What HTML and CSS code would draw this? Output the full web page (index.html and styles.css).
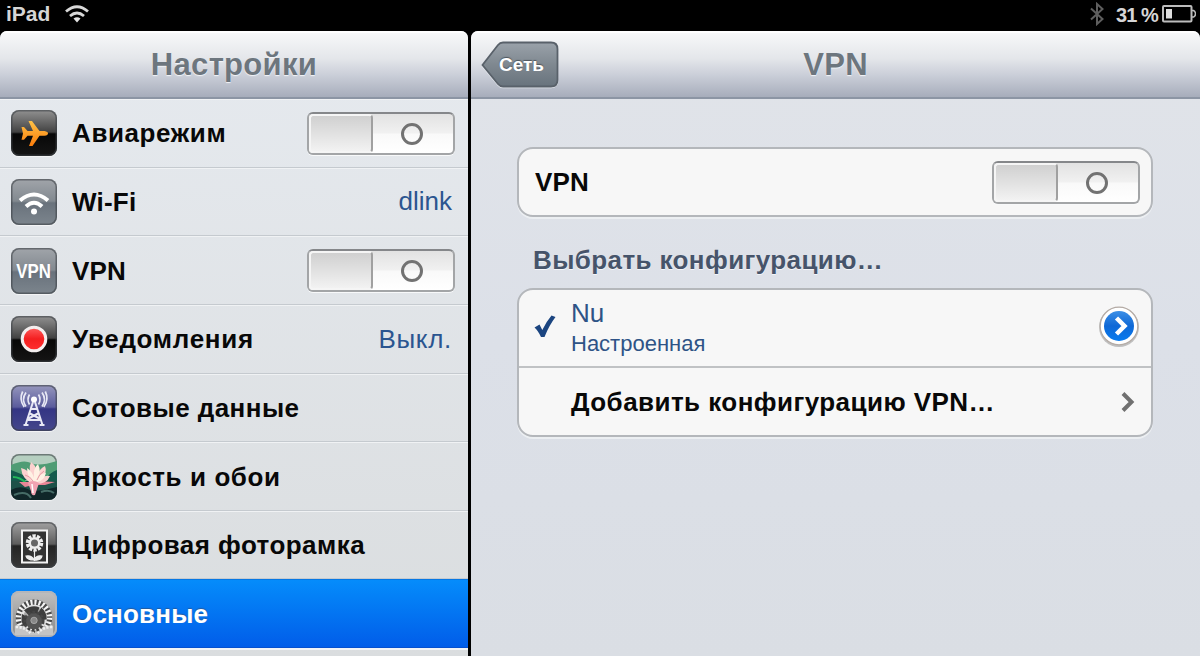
FILE: index.html
```html
<!DOCTYPE html>
<html lang="ru">
<head>
  <meta charset="UTF-8">
  <meta name="viewport" content="width=device-width, initial-scale=1.0">
  <title>Настройки</title>
  <link rel="stylesheet" href="styles.css">
</head>
<body>
  <!-- Строка состояния -->
  <div class="status-bar">
    <span class="device">iPad</span>
    <svg class="status-wifi" width="26" height="20" viewBox="0 0 26 20" fill="none" stroke="#d8d8d8" stroke-width="2.8">
      <path d="M2 7.5Q13-2 24 7.5"/>
      <path d="M6 12Q13 6 20 12"/>
      <path d="M9.500 14.600Q13 11.800 16.500 14.600L13 18.500z" fill="#e4e4e4" stroke="none"/>
    </svg>
    <svg class="bluetooth" width="14" height="24" viewBox="0 0 14 24" fill="none" stroke="#5e5e5e" stroke-width="2">
      <path d="M1 6.500L12.500 17 7 22V2l5.500 5L1 17.500"/>
    </svg>
    <span class="percent">31 %</span>
    <svg class="battery" width="34" height="18" viewBox="0 0 34 18">
      <rect x="1" y="1" width="28.500" height="15.500" rx="1" fill="none" stroke="#bdbdbd" stroke-width="2"/>
      <path d="M30 5.500h1.500q2 1 2 3.300t-2 3.300H30" fill="none" stroke="#bdbdbd" stroke-width="1.500"/>
      <rect x="4" y="4" width="6" height="9.500" fill="#dedede"/>
    </svg>
  </div>

  <div class="split">
    <!-- Список разделов -->
    <div class="sidebar">
      <div class="header"><h1 class="title">Настройки</h1></div>
      <div class="row">
        <div class="icon icon-black">
          <svg viewBox="0 0 46 46">
            <defs>
              <linearGradient id="orange" x1="0" y1="0" x2="0" y2="1"><stop offset="0" stop-color="#ffc247"/><stop offset="1" stop-color="#fb7d0b"/></linearGradient>
            </defs>
            <path d="M10.500 17h2.500l3.500 4h5.500L17.500 11h3.500l7.500 10h5q3.500.7 3.500 2.400t-3.500 2.400h-5L21.500 36H18l4-10.200h-5.500l-3.500 4h-2.500l1.500-6.400z" fill="url(#orange)"/>
          </svg>
        </div>
        <span class="label l-air">Авиарежим</span>
        <div class="toggle"><div class="knob"></div><div class="off"></div></div>
      </div>
      <div class="row">
        <div class="icon icon-gray">
          <svg viewBox="0 0 46 46" fill="none" stroke="#fff" stroke-width="4">
            <path d="M9 21.500Q23 9.500 37 21.500"/>
            <path d="M15 27.500Q23 20 31 27.500"/>
            <circle cx="23" cy="32.500" r="3" fill="#fff" stroke="none"/>
          </svg>
        </div>
        <span class="label">Wi-Fi</span>
        <span class="value v-wifi">dlink</span>
      </div>
      <div class="row">
        <div class="icon icon-gray"><span class="vpn-text">VPN</span></div>
        <span class="label">VPN</span>
        <div class="toggle"><div class="knob"></div><div class="off"></div></div>
      </div>
      <div class="row">
        <div class="icon icon-black">
          <svg viewBox="0 0 46 46">
            <defs>
              <linearGradient id="red" x1="0" y1="0" x2="0" y2="1"><stop offset="0" stop-color="#ff5e5e"/><stop offset=".5" stop-color="#f41f20"/><stop offset="1" stop-color="#ff3030"/></linearGradient>
            </defs>
            <circle cx="23" cy="23" r="11.800" fill="url(#red)" stroke="#f3eeee" stroke-width="3"/>
          </svg>
        </div>
        <span class="label l-notify">Уведомления</span>
        <span class="value v-notify">Выкл.</span>
      </div>
      <div class="row">
        <div class="icon icon-blue">
          <svg viewBox="0 0 46 46" fill="none" stroke="#e8e8f5" stroke-width="2">
            <circle cx="23" cy="14.500" r="3" fill="#fff" stroke="none"/>
            <path d="M18.500 9.500q-3 5 0 10M27.500 9.500q3 5 0 10M15 7.500q-5 7 0 14M31 7.500q5 7 0 14M11.700 6.500q-4 8 1.500 15.500M34.300 6.500q4 8-1.500 15.500" stroke-width="1.700"/>
            <path d="M22 17L14.500 40M24 17l7.500 23M20.500 24h5M19 28.500l9.500 5M27 28.500l-9.500 5M17 35h12M12.500 40h5M28.500 40h5"/>
          </svg>
        </div>
        <span class="label l-cell">Сотовые данные</span>
      </div>
      <div class="row">
        <div class="icon icon-lotus">
          <svg viewBox="0 0 46 46">
            <path d="M0 11q13-6 20-2T46 7v18L30 28 0 25z" fill="#4f9c74"/>
            <path d="M0 16q9 3 17 8l-7 6L0 29zM46 16q-6 2-12 9l4 5 8-1z" fill="#145a4c"/>
            <path d="M0 27h46v10H0z" fill="#1d5148"/>
            <path d="M2 23q7 0 13 6" stroke="#24b95b" stroke-width="2" fill="none"/>
            <path d="M0 36q10-6 20 1l13-1 13-3v13H0z" fill="#102629"/>
            <path d="M3 41q12-5 17 3M30 38q8-3 13 1" stroke="#456b66" stroke-width="2" fill="none"/>
            <path d="M22 28L8 28l6 5 8-2zM24 27l20 1-10 3-10 0z" fill="#e88696"/>
            <path d="M23 30Q11 26 10 14q8 2 11 9Q17 15 20 8q7 5 6 14 2-7 8-10 3 7-4 12 5-3 9-2-3 8-14 8z" fill="#fbd1cf"/>
            <path d="M22 28Q16 22 16 14q5 3 7 10-1-10 4-14 4 8-1 15 4-6 9-6-2 8-9 9z" fill="#fff1e4"/>
            <path d="M14 21q5 1 8 6M33 17q-5 3-7 9" stroke="#e59aa3" stroke-width="1" fill="none"/>
            <path d="M17 29q5-4 11 0l-4 12q-4 1-4-4z" fill="#f1a3b2"/>
            <path d="M21 30l1 9" stroke="#fff" stroke-width="1.500"/>
          </svg>
        </div>
        <span class="label l-bright">Яркость и обои</span>
      </div>
      <div class="row">
        <div class="icon icon-frame">
          <svg viewBox="0 0 46 46" fill="none">
            <rect x="11" y="8.500" width="25" height="32" fill="#333" stroke="#f3f3f3" stroke-width="2"/>
            <path d="M23.500 28v11M23 38q-7 0-8-4 6-1 8 4q2-5 8-4-1 5-8 4" fill="#eee" stroke="#eee" stroke-width="1.200"/>
            <circle cx="23.500" cy="21" r="7" stroke="#eee" stroke-width="3.500" stroke-dasharray="3.200 1.198"/>
            <circle cx="23.500" cy="21" r="6" fill="#eee"/>
            <circle cx="23.500" cy="21" r="3.500" fill="#666"/>
          </svg>
        </div>
        <span class="label l-frame">Цифровая фоторамка</span>
      </div>
      <div class="row selected">
        <div class="icon icon-gear">
          <svg viewBox="0 0 46 46" fill="none">
            <circle cx="23" cy="27" r="17" stroke="#4a4a4a" stroke-width="6"/>
            <circle cx="23" cy="27" r="17" stroke="#f4f4f4" stroke-width="6" stroke-dasharray="2.300 2.150"/>
            <circle cx="23" cy="27" r="13" fill="#aaa" stroke="#e2e2e2" stroke-width="2.500"/>
            <path d="M23 30L12 19q9-7 17-3zM23 30l8-14q6 5 6 13zM10 23l12 7-10 7q-4-6-2-14z" fill="#3d3d3d"/>
            <path d="M2 36q12-2 21 8 8-10 21-8v10H2z" fill="#c4c4c4"/>
            <path d="M3 37q10 0 16 7M43 37q-10 0-16 7" stroke="#eee" stroke-width="3" stroke-dasharray="2.500 1.500"/>
            <circle cx="23" cy="31" r="9" fill="#545454"/>
            <circle cx="23" cy="31" r="10" stroke="#454545" stroke-width="3" stroke-dasharray="3 2"/>
            <circle cx="23" cy="30" r="3.500" fill="#888" stroke="#aaa"/>
          </svg>
        </div>
        <span class="label l-general">Основные</span>
      </div>
    </div>

    <!-- Настройки VPN -->
    <div class="detail">
      <div class="header detail-header">
        <div class="back">
          <svg width="78" height="48" viewBox="0 0 78 48">
            <defs>
              <linearGradient id="back" x1="0" y1="0" x2="0" y2="1"><stop offset="0" stop-color="#9aa2aa"/><stop offset=".5" stop-color="#7f8890"/><stop offset="1" stop-color="#68737d"/></linearGradient>
            </defs>
            <path d="M22 2.500H70q6.500 0 6.500 6.500V40q0 6.500-6.500 6.500H22q-3 0-5-2.500L1.500 25.500 17 5q2-2.500 5-2.500z" fill="none" stroke="#e3e6ec" stroke-width="1.500"/>
            <path d="M22 1.500H70q6.500 0 6.500 6.500V39q0 6.500-6.500 6.500H22q-3 0-5-2.500L1.500 24 17 4q2-2.500 5-2.500z" fill="url(#back)" stroke="#59616a" stroke-width="1.800"/>
          </svg>
          <span class="back-text">Сеть</span>
        </div>
        <h2 class="title">VPN</h2>
      </div>
      <div class="content">
        <div class="card card-vpn">
          <span class="label">VPN</span>
          <div class="toggle"><div class="knob"></div><div class="off"></div></div>
        </div>
        <h3 class="section">Выбрать конфигурацию…</h3>
        <div class="card">
          <div class="config">
            <svg class="check" width="22" height="24" viewBox="0 0 22 24">
              <path d="M.5 13.500l5-3 2.800 5.500Q12 8 17.500 1.500L21.500 3Q15 11.500 10.500 23H7Q4 16.500.5 13.500z" fill="#1b4580"/>
            </svg>
            <div class="config-text">
              <span class="config-name">Nu</span>
              <span class="config-note">Настроенная</span>
            </div>
            <svg class="disclosure" width="42" height="44" viewBox="0 0 42 44">
              <defs>
                <linearGradient id="blue" x1="0" y1="0" x2="0" y2="1"><stop offset="0" stop-color="#3c8fe6"/><stop offset=".5" stop-color="#0f68d6"/><stop offset="1" stop-color="#087bef"/></linearGradient>
              </defs>
              <circle cx="21" cy="22" r="20" fill="#8a8a8a" opacity=".5"/>
              <circle cx="21" cy="21" r="18.800" fill="#fff" stroke="#b5aca6" stroke-width="1.200"/>
              <circle cx="21" cy="21" r="15" fill="url(#blue)"/>
              <path d="M18.500 13l8 8-8 8" fill="none" stroke="#fff" stroke-width="4.500"/>
            </svg>
          </div>
          <div class="config add">
            <span class="label l-add">Добавить конфигурацию VPN…</span>
            <svg class="chevron" width="16" height="22" viewBox="0 0 16 22">
              <path d="M3 2.500l8.500 8.500L3 19.500" fill="none" stroke="#707070" stroke-width="4"/>
            </svg>
          </div>
        </div>
      </div>
    </div>
  </div>
</body>
</html>
```

FILE: styles.css
```css
* {
  box-sizing: border-box;
}

body {
  margin: 0;
  height: 656px;
  overflow: hidden;
  background: #000;
  font-family: "Liberation Sans", Arial, sans-serif;
  color: #080808;
}

/* Строка состояния */
.status-bar {
  display: flex;
  align-items: center;
  height: 31px;
  padding: 0 4px 3px 6px;
  color: #d6d6d6;
  font-size: 21px;
  font-weight: bold;
  white-space: nowrap;
}

.device {
  width: 58px;
}

.bluetooth {
  margin-left: auto;
  margin-right: 12px;
}

.percent {
  width: 46px;
  padding-top: 2px;
  font-size: 20px;
  letter-spacing: -0.9px;
}

.battery {
  flex: none;
}

/* Две панели */
.split {
  display: flex;
  gap: 3px;
  height: 625px;
}

.sidebar,
.detail {
  overflow: hidden;
  border-radius: 7px 7px 0 0;
}

.sidebar {
  width: 468px;
  background: linear-gradient(#e6eaef, #dadddf);
}

.detail {
  flex: 1;
  background: linear-gradient(#e1e4e9, #dce0e8 50%, #dadee4);
}

.header {
  display: flex;
  align-items: center;
  justify-content: center;
  height: 68px;
  border-top: 2px solid #fff;
  border-bottom: 2px solid #8c95a4;
  background: linear-gradient(#f7f8f9, #e4e6ea 40%, #cbcfd9 65%, #a7adbb);
}

.title {
  margin: 0;
  color: #6d767e;
  font-size: 31px;
  letter-spacing: 0.3px;
  text-shadow: 0 1px 1px #f3f5f8;
}

/* Пункты списка */
.row {
  display: flex;
  align-items: center;
  height: 68.65px;
  padding: 0 13px 0 11px;
  border-top: 1px solid #f0f2f4;
  border-bottom: 1px solid #c5cacf;
}

.selected {
  border-top-color: #0677e4;
  border-bottom-color: #0650cf;
  background: linear-gradient(#058cfb, #015de9);
  box-shadow: 0 2px 0 #f1f4f8;
}

.selected .label {
  color: #fff;
  text-shadow: 0 -1px 1px #245b9e;
}

.label {
  padding-top: 1px;
  font-size: 26px;
  font-weight: bold;
  letter-spacing: 0.2px;
  white-space: nowrap;
}

.l-air {
  letter-spacing: 0.6px;
}

.l-notify {
  letter-spacing: 0.7px;
}

.l-cell,
.l-frame,
.l-add {
  letter-spacing: 0.45px;
}

.l-bright {
  letter-spacing: 0.6px;
}

.value {
  margin-left: auto;
  color: #2b5590;
  font-size: 26px;
}

.v-wifi {
  margin-right: 3px;
}

.v-notify {
  margin-right: 3px;
  letter-spacing: 0.7px;
}

/* Значки */
.icon {
  display: flex;
  flex: none;
  align-items: center;
  justify-content: center;
  width: 46px;
  height: 46px;
  margin-right: 15px;
  overflow: hidden;
  border-radius: 8px;
  box-shadow: inset 0 0 0 1.5px rgba(60, 65, 70, 0.6), 0 1px 1px #f5f6f7;
}

.icon svg {
  width: 46px;
  height: 46px;
}

.icon-black {
  background: linear-gradient(#929292, #424242 48%, #080808 52%, #151515);
}

.icon-gray {
  background: linear-gradient(#a1a5aa, #828990 48%, #69727c 52%, #7c858d);
}

.icon-blue {
  background: linear-gradient(#9697bd, #5b5c9d 48%, #343584 52%, #45478b);
}

.icon-lotus {
  background: #b5cfc0;
}

.icon-frame {
  background: linear-gradient(#a2a2a2, #5d5d5d 48%, #242424 52%, #383838);
}

.icon-gear {
  background: linear-gradient(#c0c0c0, #888);
  box-shadow: inset 0 0 0 2px #b3b6bb;
}

.icon-gear svg {
  width: 42px;
  height: 42px;
}

.vpn-text {
  color: #fff;
  font-size: 21px;
  font-weight: bold;
  transform: scaleX(0.8);
}

/* Переключатель */
.toggle {
  display: flex;
  width: 148px;
  height: 43px;
  margin-left: auto;
  border: 2px solid #a3a5a7;
  border-top-color: #85878a;
  border-radius: 6px;
  background: linear-gradient(#e2e2e2, #f1f1f1 49%, #f9f9f9 51%, #fff);
  box-shadow: 0 1px 0 #f8f9fa;
}

.knob {
  width: 64px;
  border: 2px solid #f5f5f5;
  border-right: 2px solid #a0a0a0;
  border-radius: 4px;
  background: linear-gradient(#d0d0d0, #f2f2f2);
}

.off {
  width: 22px;
  height: 22px;
  margin: 9px 0 0 28px;
  border: 3px solid #727272;
  border-radius: 50%;
}

/* Правая панель */
.detail-header {
  position: relative;
}

.back {
  position: absolute;
  left: 10px;
  top: 8px;
  width: 78px;
  height: 48px;
}

.back-text {
  position: absolute;
  left: 18px;
  top: 13px;
  color: #fff;
  font-size: 19px;
  font-weight: bold;
  text-shadow: 0 -1px 1px #4d555d;
}

.content {
  padding: 48px 47px 0 46px;
}

.card {
  border: 2px solid #b4b7bb;
  border-radius: 16px;
  background: #f7f7f7;
  box-shadow: 0 2px 0 #eceff2;
}

.card-vpn {
  display: flex;
  align-items: center;
  height: 70px;
  padding: 0 11px 0 16px;
}

.section {
  height: 71px;
  margin: 0;
  padding: 28px 0 0 16px;
  color: #46546a;
  font-size: 26px;
  line-height: 30px;
  letter-spacing: 0.4px;
  text-shadow: 0 1px 0 #f3f5f8;
}

.config {
  display: flex;
  align-items: center;
  height: 76px;
  padding: 0 11px 0 15px;
}

.check {
  margin: 0 15px 4px 0;
}

.config-text {
  display: flex;
  flex-direction: column;
  padding-bottom: 1px;
  color: #2e5386;
}

.config-name {
  font-size: 26px;
  line-height: 32px;
}

.config-note {
  font-size: 22px;
  line-height: 29px;
}

.disclosure {
  margin: 0 0 2px auto;
}

.add {
  height: 69px;
  padding: 0 15px 0 52px;
  border-top: 2px solid #c0c2c4;
}

.chevron {
  margin-left: auto;
}
```
